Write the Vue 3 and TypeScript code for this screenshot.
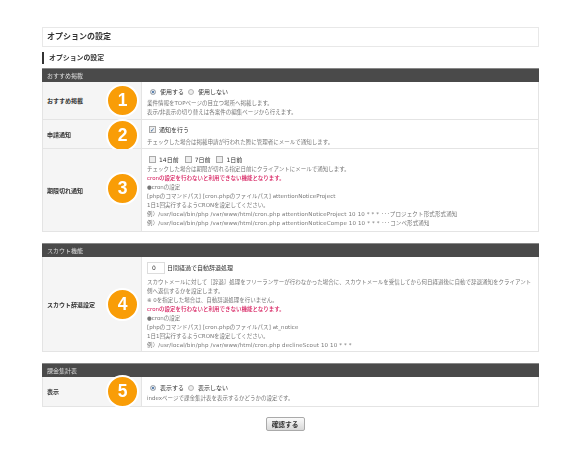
<script setup lang="ts">
interface Row { label: string; badge: number; cls: string }
const rows: Record<string, Row> = {
  a: { label: 'おすすめ掲載', badge: 1, cls: 'r1' },
  b: { label: '申請通知', badge: 2, cls: 'r2' },
  c: { label: '期限切れ通知', badge: 3, cls: 'r3' },
  d: { label: 'スカウト辞退設定', badge: 4, cls: 'r4' },
  e: { label: '表示', badge: 5, cls: 'r5' }
}
</script>

<template>
  <main class="page">
    <h1 class="title">オプションの設定</h1>
    <h2 class="sub">オプションの設定</h2>

    <section class="sec">
      <h3 class="head">おすすめ掲載</h3>
      <div class="row" :class="rows.a.cls">
        <div class="label">{{ rows.a.label }}<span class="badge">{{ rows.a.badge }}</span></div>
        <div class="body">
          <div class="ctl"><span class="radio on"></span>使用する<span class="radio"></span>使用しない</div>
          <p>業件情報をTOPページの目立つ場所へ掲載します。</p>
          <p>表示/非表示の切り替えは各案件の編集ページから行えます。</p>
        </div>
      </div>
      <div class="row" :class="rows.b.cls">
        <div class="label">{{ rows.b.label }}<span class="badge">{{ rows.b.badge }}</span></div>
        <div class="body">
          <div class="ctl"><span class="check on">✓</span>通知を行う</div>
          <p>チェックした場合は掲載申請が行われた際に管理者にメールで通知します。</p>
        </div>
      </div>
      <div class="row" :class="rows.c.cls">
        <div class="label">{{ rows.c.label }}<span class="badge">{{ rows.c.badge }}</span></div>
        <div class="body">
          <div class="ctl"><span class="check"></span>14日前<span class="check"></span>7日前<span class="check"></span>1日前</div>
          <p>チェックした場合は期限が切れる指定日前にクライアントにメールで通知します。</p>
          <p class="red">cronの設定を行わないと利用できない機能となります。</p>
          <p>●cronの設定</p>
          <p class="path">[phpのコマンドパス] [cron.phpのファイルパス] attentionNoticeProject</p>
          <p>1日1回実行するようCRONを設定してください。</p>
          <p class="code">例）/usr/local/bin/php /var/www/html/cron.php attentionNoticeProject 10 10 * * * ･･･プロジェクト形式形式通知</p>
          <p class="code">例）/usr/local/bin/php /var/www/html/cron.php attentionNoticeCompe 10 10 * * * ･･･コンペ形式通知</p>
        </div>
      </div>
    </section>

    <section class="sec">
      <h3 class="head">スカウト機能</h3>
      <div class="row" :class="rows.d.cls">
        <div class="label">{{ rows.d.label }}<span class="badge">{{ rows.d.badge }}</span></div>
        <div class="body">
          <div class="ctl"><span class="input">0</span>日間経過で自動辞退処理</div>
          <p>スカウトメールに対して［辞退］処理をフリーランサーが行わなかった場合に、スカウトメールを受信してから何日経過後に自動で辞退通知をクライアント</p>
          <p>側へ返信するかを設定します。</p>
          <p>※ 0を指定した場合は、自動辞退処理を行いません。</p>
          <p class="red">cronの設定を行わないと利用できない機能となります。</p>
          <p>●cronの設定</p>
          <p class="path">[phpのコマンドパス] [cron.phpのファイルパス] at_notice</p>
          <p>1日1回実行するようCRONを設定してください。</p>
          <p class="code">例）/usr/local/bin/php /var/www/html/cron.php declineScout 10 10 * * *</p>
        </div>
      </div>
    </section>

    <section class="sec">
      <h3 class="head">課金集計表</h3>
      <div class="row" :class="rows.e.cls">
        <div class="label">{{ rows.e.label }}<span class="badge">{{ rows.e.badge }}</span></div>
        <div class="body">
          <div class="ctl"><span class="radio on"></span>表示する<span class="radio"></span>表示しない</div>
          <p>indexページで課金集計表を表示するかどうかの設定です。</p>
        </div>
      </div>
    </section>

    <div class="actions"><button class="btn" type="button">確認する</button></div>
  </main>
</template>

<style scoped>
.page {
  width: 497px;
  height: 460px;
  box-sizing: border-box;
  margin-left: 42px;
  padding-top: 27px;
  font-family: "DejaVu Sans", "Noto Sans CJK JP", sans-serif;
  color: #777;
  filter: blur(0.35px);
}
.title {
  margin: 0;
  height: 20px;
  box-sizing: border-box;
  border: 1px solid #e8e8e8;
  padding-left: 4px;
  font-size: 8px;
  line-height: 18px;
  font-weight: 700;
  color: #333;
}
.sub {
  margin: 5px 0 4px;
  height: 12px;
  border-left: 2px solid #333;
  padding-left: 5px;
  font-size: 6.9px;
  line-height: 12px;
  font-weight: 700;
  color: #333;
}
.sec { margin-bottom: 11px; }
.head {
  margin: 0;
  height: 14px;
  box-sizing: border-box;
  background: #4a4a4a;
  border-top: 1px solid #888;
  padding-left: 5px;
  font-size: 6px;
  line-height: 13px;
  font-weight: 400;
  color: #ddd;
}
.row {
  display: grid;
  grid-template-columns: 99px 1fr;
  box-sizing: border-box;
  border: 1px solid #e4e4e4;
  border-top: 0;
}
.r1 { height: 38px; --ctl-top: 4px; --ctl-gap: 2px; --badge-shift: 0px; }
.r2 { height: 29px; --ctl-top: 4px; --ctl-gap: 3px; --badge-shift: 1.5px; }
.r3 { height: 83px; --ctl-top: 5px; --ctl-gap: 0px; --badge-shift: -2px; }
.r4 { height: 95px; --ctl-top: 5px; --ctl-gap: 4.5px; --badge-shift: 0px; }
.r5 { height: 30px; --ctl-top: 5px; --ctl-gap: 1px; --badge-shift: 0px; }
.label {
  position: relative;
  display: flex;
  align-items: center;
  background: #f5f5f5;
  border-right: 1px solid #e4e4e4;
  padding-left: 4px;
  font-size: 6px;
  font-weight: 700;
  color: #333;
}
.badge {
  position: absolute;
  left: 63px;
  top: 50%;
  width: 29px;
  height: 29px;
  margin-top: calc(-16.5px + var(--badge-shift));
  border: 2px solid #fff;
  border-radius: 50%;
  background: #f99d07;
  color: #fff;
  font-family: "Liberation Sans", sans-serif;
  font-size: 17.5px;
  font-weight: 700;
  line-height: 29px;
  text-align: center;
}
.body {
  padding: var(--ctl-top) 0 0 5px;
  font-size: 5.5px;
  line-height: 9px;
}
.body p { margin: 0; white-space: nowrap; }
.body .code { letter-spacing: 0.14px; }
.body .path { letter-spacing: 0.06px; }
.ctl {
  display: flex;
  align-items: center;
  height: 11px;
  margin-bottom: var(--ctl-gap);
  font-size: 6px;
  color: #333;
}
.red { color: #d6185a; font-weight: 500; }
.radio {
  width: 6px;
  height: 6px;
  box-sizing: border-box;
  margin: 0 4px 0 3px;
  border: 1px solid #b5b5b5;
  border-radius: 50%;
  background: #eee;
}
.ctl .radio:not(:first-child) { margin-left: 4px; }
.radio.on { background: #2b5c94; box-shadow: inset 0 0 0 1px #fff; }
.check {
  width: 7px;
  height: 7px;
  box-sizing: border-box;
  margin: 0 3px 0 2px;
  border: 1px solid #aaa;
  background: #eee;
  font-size: 6px;
  line-height: 5px;
  color: #2b5c94;
  text-align: center;
  overflow: hidden;
}
.check:not(:first-child) { margin-left: 6px; }
.input {
  width: 18px;
  height: 12px;
  flex: none;
  box-sizing: border-box;
  margin-right: 2px;
  border: 1px solid #ddd;
  padding-left: 4px;
  line-height: 10px;
}
.actions { display: flex; justify-content: center; margin-top: -1px; padding-right: 11px; }
.btn {
  width: 39px;
  height: 14px;
  padding: 0;
  border: 1px solid #aaa;
  border-radius: 2px;
  background: linear-gradient(#fafafa, #d8d8d8);
  font-family: inherit;
  font-size: 6.7px;
  font-weight: 700;
  color: #333;
}
</style>
